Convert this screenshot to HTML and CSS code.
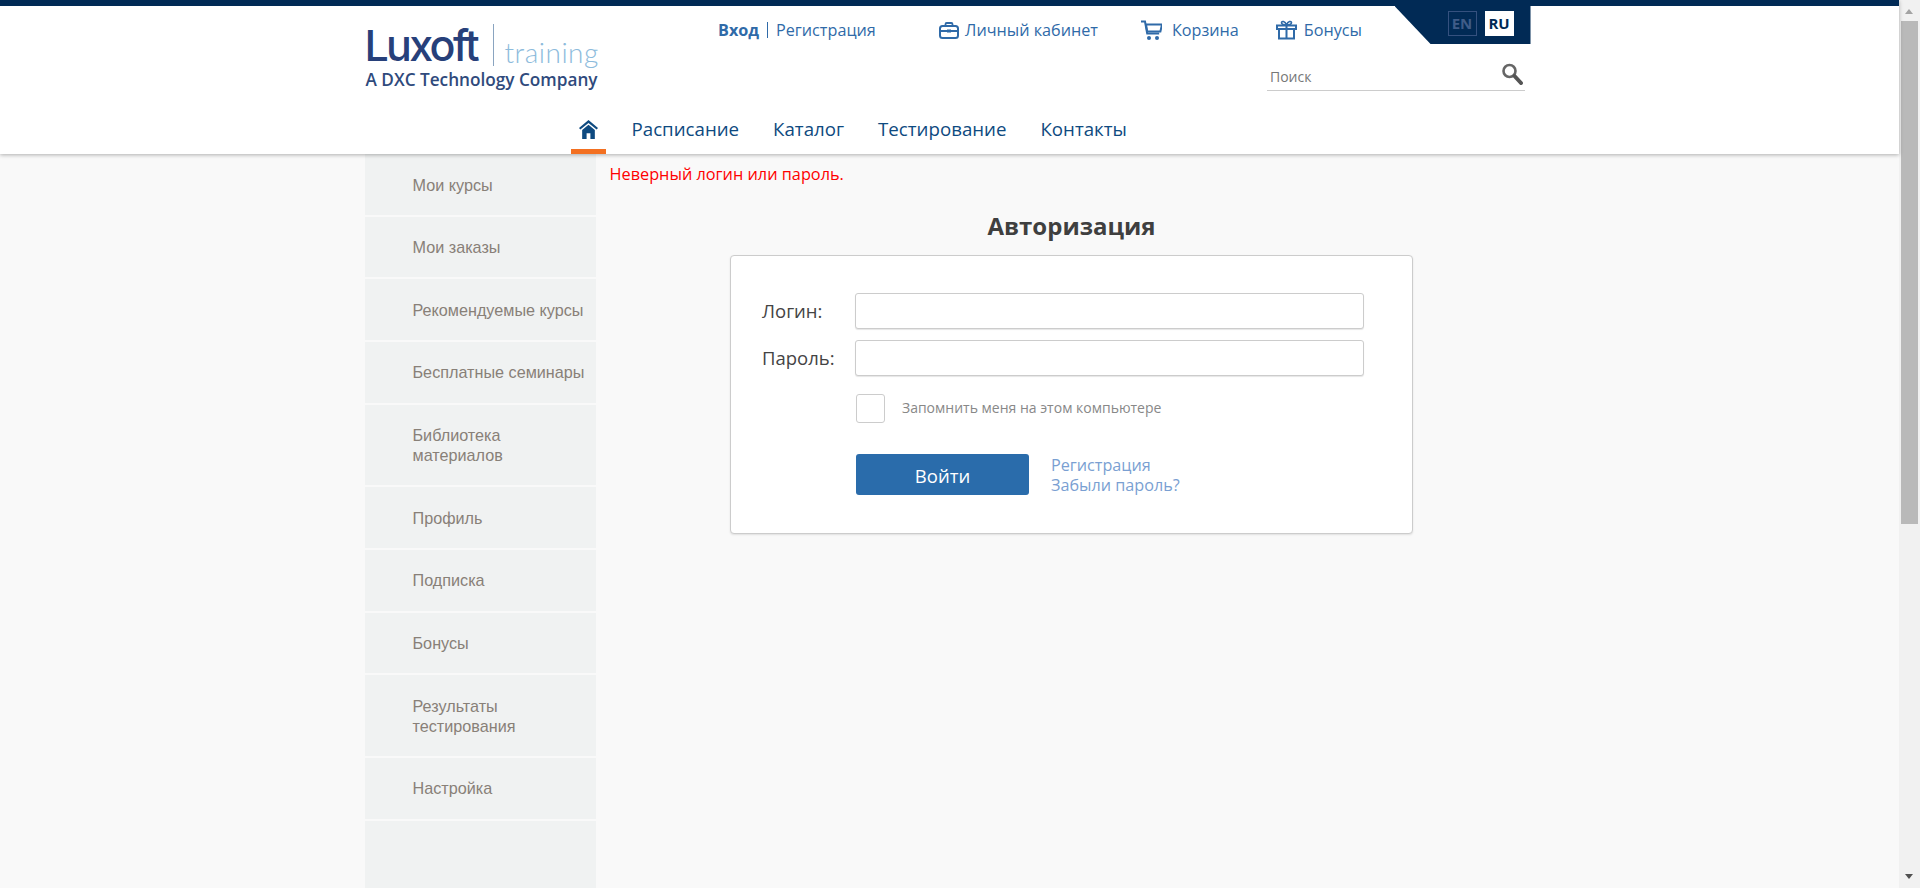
FILE: index.html
```html
<!DOCTYPE html>
<html lang="ru">
<head>
  <meta charset="UTF-8" />
  <meta name="viewport" content="width=device-width, initial-scale=1.0" />
  <title>Авторизация</title>
  <link rel="stylesheet" href="styles.css">
</head>
<body>
  <div class="page">
    <header class="header">
      <div class="wrap hd">
        <a class="logo" href="#">
          <div class="logo-top">
            <span class="logo-name">Luxoft</span>
            <span class="logo-sub">training</span>
          </div>
          <div class="logo-dxc">A DXC Technology Company</div>
        </a>
        <div class="hd-right">
          <div class="top-row">
            <div class="auth-links"><b>Вход</b><i></i><a href="#">Регистрация</a></div>
            <a class="top-link cabinet" href="#">
              <svg width="20" height="17" viewBox="0 0 20 17"><rect x="1" y="4" width="18" height="12" rx="2.5" fill="none" stroke="#2f6aa8" stroke-width="2"/><path d="M6.5 4V2.2Q6.5 1 7.7 1h4.6q1.2 0 1.2 1.2V4M1 9h7M12 9h7" fill="none" stroke="#2f6aa8" stroke-width="1.8"/><rect x="8" y="7.5" width="4" height="3" fill="#2f6aa8"/></svg>
              Личный кабинет
            </a>
            <a class="top-link cart" href="#">
              <svg width="21" height="21" viewBox="0 0 21 21"><path d="M0 1.5h4l2.2 12h12" fill="none" stroke="#2f6aa8" stroke-width="2"/><path d="M5 4.5h16l-1.6 7H6.2z" fill="none" stroke="#2f6aa8" stroke-width="2"/><circle cx="8" cy="18" r="2" fill="#2f6aa8"/><circle cx="16" cy="18" r="2" fill="#2f6aa8"/></svg>
              Корзина
            </a>
            <a class="top-link bonus" href="#">
              <svg width="21" height="20" viewBox="0 0 21 20"><path d="M3 9v9.5h15V9M1 5.5h19V9H1zM10.5 5.5v13" fill="none" stroke="#2f6aa8" stroke-width="2"/><path d="M10.5 5C8 5 5.5 4.500 5.500 2.800 5.500 .8 9 .8 10.500 5 12 .8 15.500 .8 15.500 2.800 15.500 4.500 13 5 10.500 5z" fill="none" stroke="#2f6aa8" stroke-width="1.600"/></svg>
              Бонусы
            </a>
            <div class="lang">
              <a class="lang-en" href="#">EN</a>
              <a class="lang-ru" href="#">RU</a>
            </div>
          </div>
          <div class="search">
            <input type="text" placeholder="Поиск" />
            <svg width="22" height="22" viewBox="0 0 22 22"><circle cx="8.500" cy="8" r="6" fill="none" stroke="#666" stroke-width="2.600"/><path d="M13.500 13l6.500 7" stroke="#555" stroke-width="4" stroke-linecap="round"/></svg>
          </div>
        </div>
      </div>
      <nav class="wrap nav">
        <a class="nav-home" href="#">
          <svg width="19" height="19" viewBox="0 0 18 18"><path d="M9 0L0 7.500l1.300 1.500L9 2.800 16.700 9 18 7.500z" fill="#0e4a80"/><path d="M9 4.600L3 9.500V18h4.200v-5.500h3.600V18H15V9.500z" fill="#0e4a80"/></svg>
        </a>
        <a href="#">Расписание</a>
        <a href="#">Каталог</a>
        <a href="#">Тестирование</a>
        <a href="#">Контакты</a>
      </nav>
    </header>

    <div class="wrap content">
      <ul class="side">
        <li><a href="#">Мои курсы</a></li>
        <li><a href="#">Мои заказы</a></li>
        <li><a href="#">Рекомендуемые курсы</a></li>
        <li><a href="#">Бесплатные семинары</a></li>
        <li><a href="#">Библиотека<br>материалов</a></li>
        <li><a href="#">Профиль</a></li>
        <li><a href="#">Подписка</a></li>
        <li><a href="#">Бонусы</a></li>
        <li><a href="#">Результаты<br>тестирования</a></li>
        <li><a href="#">Настройка</a></li>
      </ul>
      <main class="main">
        <p class="error">Неверный логин или пароль.</p>
        <h1>Авторизация</h1>
        <form class="card">
          <div class="field">
            <label>Логин:</label>
            <input type="text" />
          </div>
          <div class="field">
            <label>Пароль:</label>
            <input type="password" />
          </div>
          <div class="remember">
            <span class="check"></span>
            <span class="remember-text">Запомнить меня на этом компьютере</span>
          </div>
          <div class="actions">
            <button type="button">Войти</button>
            <div class="more">
              <a href="#">Регистрация</a>
              <a href="#">Забыли пароль?</a>
            </div>
          </div>
        </form>
      </main>
    </div>
  </div>

  <div class="scrollbar">
    <span class="arrow-up"></span>
    <span class="thumb"></span>
    <span class="arrow-down"></span>
  </div>
</body>
</html>
```

FILE: styles.css
```css
* {
  box-sizing: border-box;
}
html, body {
  height: 100%;
}
body {
  margin: 0;
  display: flex;
  overflow: hidden;
  background: #f9f9f9;
  font-family: "Open Sans", "Noto Sans", sans-serif;
  color: #444;
}
a {
  text-decoration: none;
  color: inherit;
}
.page {
  flex: 1;
  min-width: 0;
  display: flex;
  flex-direction: column;
}
.wrap {
  width: 1170px;
  margin: 0 auto;
}

/* header */
.header {
  position: relative;
  z-index: 2;
  height: 154px;
  flex: none;
  background: #fff;
  border-top: 6px solid #012a55;
  box-shadow: 0 1px 4px rgba(0,0,0,0.3);
}
.hd {
  display: flex;
  height: 104px;
}
.logo {
  display: block;
  flex: none;
  width: 354.5px;
  padding: 18px 0 0 0;
}
.logo-top {
  display: flex;
  height: 47px;
}
.logo-name {
  width: 129px;
  height: 42px;
  padding-right: 11px;
  border-right: 1px solid #8aa4c0;
  font-family: "Inter", sans-serif;
  font-size: 43px;
  font-weight: 500;
  line-height: 42px;
  letter-spacing: -2.7px;
  color: #27407a;
}
.logo-sub {
  margin: 11px 0 0 11px;
  font-family: "Lato", sans-serif;
  font-size: 28px;
  font-weight: 300;
  line-height: 34px;
  height: 34px;
  letter-spacing: 0.5px;
  color: #8dbbdc;
}
.logo-dxc {
  margin: 0 0 0 1px;
  font-size: 17.2px;
  font-weight: 600;
  line-height: 18px;
  white-space: nowrap;
  color: #2f4a7c;
}
.hd-right {
  flex: 1;
  min-width: 0;
}
.top-row {
  display: flex;
  height: 38px;
  font-size: 16.2px;
  color: #2f6aa8;
}
.auth-links {
  display: flex;
  align-items: center;
  height: 38px;
  width: 221px;
  margin-left: -1px;
  padding: 10px 0 0;
}
.auth-links i {
  width: 1px;
  height: 16px;
  margin: 0 8px;
  background: #2f6aa8;
}
.top-link {
  display: flex;
  align-items: center;
  gap: 6px;
  height: 38px;
  padding-top: 10px;
}
.top-link svg {
  flex: none;
}
.cart {
  margin-left: 43px;
  gap: 10px;
}
.bonus {
  margin-left: 37px;
  gap: 7px;
}
.lang {
  display: flex;
  gap: 8px;
  margin-left: auto;
  margin-right: 4px;
  width: 136px;
  height: 38px;
  padding: 5px 0 0 53px;
  background: #012a55;
  clip-path: polygon(0 0, 100% 0, 100% 100%, 36px 100%);
  font-size: 15px;
  font-weight: 700;
}
.lang a {
  width: 29px;
  height: 25px;
  line-height: 25px;
  text-align: center;
}
.lang-en {
  border: 1px solid #35517f;
  line-height: 23px !important;
  color: #3f5c88;
}
.lang-ru {
  background: #fff;
  color: #012a55;
}
.search {
  display: flex;
  align-items: center;
  width: 258px;
  height: 33px;
  margin: 14px 0 0 548px;
  padding: 0 2px 0 3px;
  border-bottom: 1px solid #ccc;
}
.search input {
  flex: 1;
  min-width: 0;
  padding: 4px 0 0;
  border: 0;
  outline: 0;
  background: none;
  font: 14px "Open Sans", sans-serif;
}
.search input::placeholder {
  color: #777;
}
.search svg {
  margin-top: -1px;
}
.nav {
  display: flex;
  height: 44px;
  font-size: 18.7px;
  line-height: 37px;
  color: #0e4a80;
}
.nav a {
  margin-right: 34px;
}
.nav-home {
  display: flex;
  justify-content: center;
  padding: 10px 0 0 1px;
  width: 35px;
  height: 44px;
  margin-left: 206px;
  margin-right: 26px !important;
  border-bottom: 5px solid #f37021;
}

/* content */
.content {
  flex: 1;
  display: flex;
  min-height: 0;
  width: 1170px;
}
.side {
  flex: none;
  width: 231px;
  margin: 0;
  padding: 0;
  list-style: none;
  background: #f0f2f2;
  font-family: "Liberation Sans", Arial, sans-serif;
  font-size: 16.2px;
  line-height: 20px;
  color: #888078;
}
.side li {
  padding: 20.5px 8px 20.16px 48px;
  border-bottom: 2px solid #f9f9f9;
}
.main {
  flex: 1;
  min-width: 0;
  padding-left: 13px;
}
.error {
  margin: 0 0 0 1px;
  padding-top: 8px;
  font-size: 16.3px;
  line-height: 24px;
  color: #f00;
}
.main h1 {
  margin: 23px 0 0;
  font-size: 24px;
  font-weight: 700;
  line-height: 33px;
  text-align: center;
  color: #3f3f3f;
}
.card {
  width: 683px;
  height: 279px;
  margin: 13px auto 0;
  padding: 37px 0 0 31px;
  background: #fff;
  border: 1px solid #ccc;
  border-radius: 4px;
  box-shadow: 0 1px 2px rgba(0,0,0,0.1);
}
.field {
  display: flex;
  align-items: center;
  margin-bottom: 11px;
  font-size: 18.5px;
}
.field label {
  width: 93px;
  padding-bottom: 2px;
}
.field input {
  width: 509px;
  height: 36px;
  border: 1px solid #ccc;
  border-radius: 3px;
  background: #fff;
  box-shadow: 0 1px 1px rgba(0,0,0,0.1);
}
.remember {
  display: flex;
  align-items: center;
  gap: 17px;
  margin: 18px 0 0 94px;
  font-size: 14px;
  color: #888;
}
.remember-text {
  margin-top: -2px;
}
.check {
  width: 29px;
  height: 29px;
  border: 1px solid #ccc;
  border-radius: 3px;
}
.actions {
  display: flex;
  align-items: center;
  gap: 22px;
  margin: 31px 0 0 94px;
}
.actions button {
  width: 173px;
  height: 41px;
  padding: 2px 0 0;
  border: 0;
  border-radius: 3px;
  background: #2a6cab;
  color: #fff;
  font: 18.5px "Open Sans", sans-serif;
}
.more {
  display: flex;
  flex-direction: column;
  padding-top: 1px;
  font-size: 16.2px;
  line-height: 20px;
  color: #7a9fd2;
}

/* fake browser scrollbar */
.scrollbar {
  position: relative;
  flex: none;
  width: 21px;
  background: #f1f1f1;
}
.thumb {
  position: absolute;
  left: 2px;
  top: 21px;
  width: 17px;
  height: 503px;
  background: #b9b9b9;
}
.arrow-up, .arrow-down {
  position: absolute;
  left: 6px;
  border-left: 4.500px solid transparent;
  border-right: 4.500px solid transparent;
}
.arrow-up {
  top: 9px;
  border-bottom: 5px solid #a3a3a3;
}
.arrow-down {
  bottom: 9px;
  border-top: 5px solid #505050;
}
```
